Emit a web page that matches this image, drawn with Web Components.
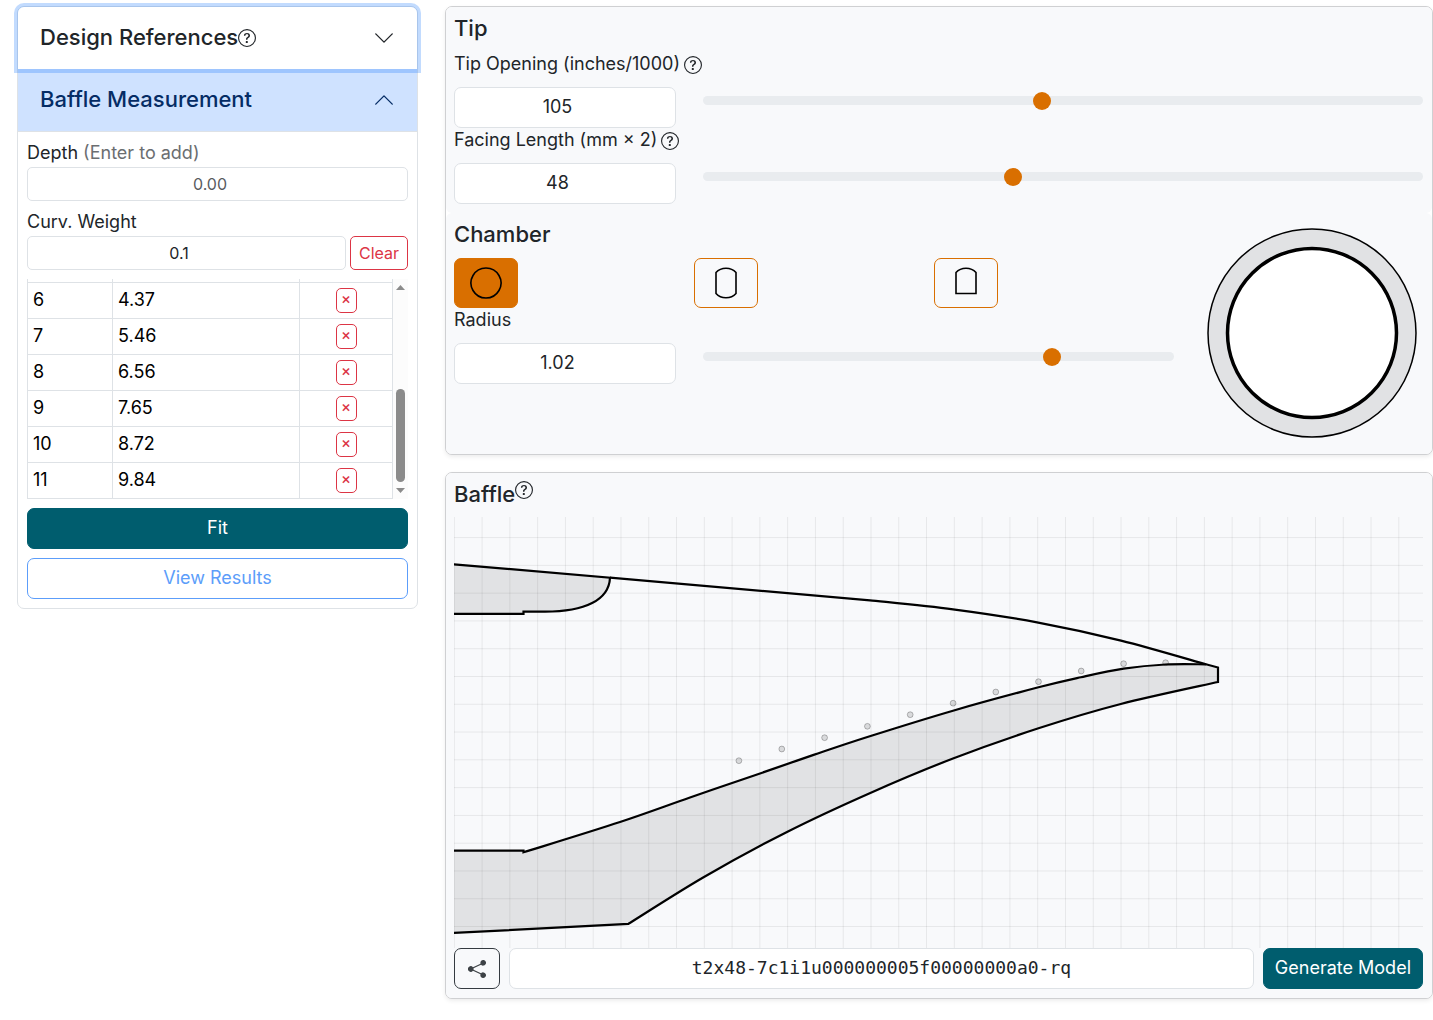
<!DOCTYPE html>
<html lang="en">
<head>
<meta charset="utf-8">
<title>Mouthpiece Designer</title>
<style>
  body { margin: 0; background: #fff; color: #212529; font: 18px/27px Inter, "Liberation Sans", sans-serif; }
</style>
</head>
<body>
<mp-app></mp-app>

<script>
const BASE = `
  *, *::before, *::after { box-sizing: border-box; }
  :host { display: block; }
  button, input { font: inherit; color: inherit; margin: 0; }
  svg { display: block; flex: none; }
  .field { width: 100%; height: 41px; padding: 4px 13px 6px; border: 1px solid #dee2e6; border-radius: 7px; background: #fff; text-align: center; }
  .small { height: 34px; padding: 4px 9px; font-size: 16px; border-radius: 5px; }
  .field::placeholder { color: #595c5f; opacity: 1; }
  .btn { height: 41px; border: 1px solid; border-radius: 7px; background: transparent; padding: 0 11px 3px; }
  .solid { background: #005d6e; border-color: #005d6e; color: #fff; }
`;

function define(name, css, markup, setup) {
  customElements.define(name, class extends HTMLElement {
    connectedCallback() {
      if (this.shadowRoot) return;
      const root = this.attachShadow({ mode: "open" });
      root.innerHTML = `<style>${BASE}${css}</style>` + (typeof markup === "function" ? markup(this) : markup);
      if (setup) setup(root, this);
    }
  });
}

/* Circled question mark */
define("mp-help", `
  button { display: block; border: 0; padding: 0; background: none; width: 18px; height: 18px; }
`, `<button type="button" aria-label="Help"><svg width="18" height="18" viewBox="0 0 16 16" fill="currentColor">
  <path d="M8 15A7 7 0 1 1 8 1a7 7 0 0 1 0 14m0 1A8 8 0 1 0 8 0a8 8 0 0 0 0 16"/>
  <path d="M5.255 5.786a.237.237 0 0 0 .241.247h.825c.138 0 .248-.113.266-.25.09-.656.54-1.134 1.342-1.134.686 0 1.314.343 1.314 1.168 0 .635-.374.927-.965 1.371-.673.489-1.206 1.06-1.168 1.987l.003.217a.25.25 0 0 0 .25.246h.811a.25.25 0 0 0 .25-.25v-.105c0-.718.273-.927 1.01-1.486.609-.463 1.244-.977 1.244-2.056 0-1.511-1.276-2.241-2.673-2.241-1.267 0-2.655.59-2.75 2.286m1.557 5.763c0 .533.425.927 1.01.927.609 0 1.028-.394 1.028-.927 0-.552-.42-.94-1.029-.94-.584 0-1.009.388-1.009.94"/>
</svg></button>`);

/* One accordion entry: header button and a collapsible body */
define("mp-accordion-item", `
  .head { display: flex; align-items: center; width: 100%; height: 62px; padding: 0 22px 1px; border: 0; background: #fff; font-size: 22px; font-weight: 500; position: relative; text-align: left; }
  .head svg { margin-left: auto; }
  .title { display: flex; align-items: center; }
  :host([first]) .head { border-radius: 6px 6px 0 0; }
  :host([focused]) .head { box-shadow: 0 0 0 4px rgba(13,110,253,.25); z-index: 1; }
  :host([open]) .head { background: #cfe2ff; color: #052c65; }
  :host([open]) .head svg { transform: rotate(180deg); }
  .body { display: none; border-top: 1px solid #dee2e6; padding: 9px; }
  :host([open]) .body { display: block; }
`, `<button class="head" type="button"><span class="title"><slot name="title"></slot></span>
  <svg width="22" height="22" viewBox="0 0 16 16" fill="none" stroke="currentColor" stroke-linecap="round" stroke-linejoin="round"><path d="m2 5 6 6 6-6"/></svg></button>
  <div class="body"><slot></slot></div>`);

/* Table of measured depths with its own scroll bar */
define("mp-depth-table", `
  :host { display: flex; height: 220px; overflow: hidden; }
  .view { flex: 1; min-width: 0; overflow: hidden; }
  table { width: 100%; border-collapse: collapse; table-layout: fixed; color: #000; }
  col.n { width: 85px; } col.x { width: 93px; }
  td { border: 1px solid #dee2e6; padding: 0 5px 2px; height: 36px; }
  tr.cut td { height: 3px; padding: 0; border-top: 0; }
  td.x { padding: 0; }
  td.x button { display: block; margin: 0 auto; width: 21px; height: 25px; border: 1px solid #dc3545; border-radius: 5px; background: none; color: #dc3545; font-size: 15px; font-weight: 500; line-height: 20px; padding: 0 0 2px; }
  .bar { width: 15px; background: #fcfcfc; display: flex; flex-direction: column; align-items: center; padding: 6px 0; }
  .thumb { width: 9px; height: 93px; border-radius: 5px; background: #8b8b8b; margin: auto 0 6px; }
`, () => {
  const rows = [[6, "4.37"], [7, "5.46"], [8, "6.56"], [9, "7.65"], [10, "8.72"], [11, "9.84"]];
  return `<div class="view"><table><colgroup><col class="n"><col><col class="x"></colgroup>
    <tbody><tr class="cut" aria-hidden="true"><td></td><td></td><td></td></tr>
    ${rows.map(([n, v]) => `<tr><td>${n}</td><td>${v}</td><td class="x"><button type="button" aria-label="Remove ${n}">×</button></td></tr>`).join("")}
    </tbody></table></div>
    <div class="bar" aria-hidden="true"><svg width="9" height="5" viewBox="0 0 9 5"><path d="M0 5 4.500 0 9 5z" fill="#8b8b8b"/></svg>
    <div class="thumb"></div><svg width="9" height="5" viewBox="0 0 9 5"><path d="M0 0h9L4.500 5z" fill="#8b8b8b"/></svg></div>`;
});

define("mp-measurement", `
  :host { display: flex; flex-direction: column; gap: 9px; }
  label { display: block; line-height: 23px; margin-bottom: 3px; }
  label span { color: #6b6e71; }
  .row { display: flex; gap: 4px; }
  .row .field { flex: 1; min-width: 0; }
  .clear { height: 34px; border-color: #dc3545; color: #dc3545; font-size: 16px; border-radius: 5px; padding: 0 8px; }
  .outline { color: #5c9dfa; border-color: #5c9dfa; }
`, `<div><label for="depth">Depth <span>(Enter to add)</span></label><input class="field small" id="depth" type="number" placeholder="0.00"></div>
  <div><label for="weight">Curv. Weight</label><div class="row"><input class="field small" id="weight" type="number" step="0.1" value="0.1"><button class="btn clear" type="button">Clear</button></div></div>
  <mp-depth-table></mp-depth-table>
  <button class="btn solid" type="button">Fit</button>
  <button class="btn outline" type="button">View Results</button>`);

/* Number box tied to a slider */
define("mp-slider-field", `
  .label { display: flex; align-items: center; gap: 4px; height: 26px; margin-bottom: 9px; }
  label { padding-bottom: 3px; }
  .row { display: grid; grid-template-columns: 222fr var(--track, 720fr); gap: 27px; align-items: start; }
  .row > * { min-width: 0; }
  input[type=range] { appearance: none; width: 100%; height: 26px; background: none; }
  input[type=range]::-webkit-slider-runnable-track { height: 9px; border-radius: 9px; background: #e9ecef; }
  input[type=range]::-webkit-slider-thumb { appearance: none; width: 18px; height: 18px; margin-top: -4px; border-radius: 50%; background: #d96f00; }
`, el => {
  const a = n => el.getAttribute(n);
  const range = `min="${a("min")}" max="${a("max")}" step="${a("step") || 1}" value="${a("value")}"`;
  return `<div class="label"><label for="num">${a("label")}</label><slot></slot></div>
    <div class="row"><input class="field" id="num" type="number" ${range}><input type="range" aria-label="${a("label")}" ${range}></div>`;
}, root => {
  const [num, range] = root.querySelectorAll("input");
  num.addEventListener("input", () => range.value = num.value);
  range.addEventListener("input", () => num.value = range.value);
});

define("mp-shape-picker", `
  :host { display: grid; grid-template-columns: repeat(3, 1fr); }
  button { display: flex; align-items: center; justify-content: center; width: 64px; height: 50px; padding: 0 1px 1px 0; border: 1px solid #d96f00; border-radius: 7px; background: none; }
  button[aria-pressed=true] { background: #d96f00; }
`, () => {
  const shapes = [
    ["Round", "M17 2a15 15 0 1 1-.01 0z"],
    ["Pill", "M7 6.500C12 .8 22 .8 27 6.500v21C22 33.200 12 33.200 7 27.500z"],
    ["Arch", "M7 6.500C12 .8 22 .8 27 6.500v21H7z"]
  ];
  return shapes.map(([n, d], i) => `<button type="button" aria-label="${n}" aria-pressed="${i === 0}"><svg width="34" height="34" viewBox="0 0 34 34" fill="none" stroke="#000" stroke-width="1.600"><path d="${d}"/></svg></button>`).join("");
});

define("mp-chamber-view", `svg { width: 100%; height: auto; }`, `
  <svg viewBox="0 0 222 224" role="img" aria-label="Chamber cross section">
    <circle cx="111" cy="112" r="104" fill="#e1e2e4" stroke="#000" stroke-width="1.500"/>
    <circle cx="111" cy="112" r="84.500" fill="#fff" stroke="#000" stroke-width="3.500"/>
  </svg>`);

/* Side profile of the mouthpiece over a millimetre grid */
define("mp-baffle-view", `svg { width: 100%; height: auto; }`, () => {
  const curve = p => p.slice(0, -1).map((b, i) => {
    const a = p[i - 1] || b, c = p[i + 1], d = p[i + 2] || c;
    return `C${b[0] + (c[0] - a[0]) / 6} ${b[1] + (c[1] - a[1]) / 6} ${c[0] - (d[0] - b[0]) / 6} ${c[1] - (d[1] - b[1]) / 6} ${c[0]} ${c[1]}`;
  }).join("");
  const roof = [[870, 600.3], [953, 609.3], [1037, 622.3], [1121, 640.6], [1206, 664.3]];
  const floor = [[523.5, 852.3], [620, 822], [690, 797.5], [759.3, 773.7], [813.6, 754.9], [867.4, 737], [953, 710.7], [1038.5, 687.3], [1081, 677.2], [1123.6, 668.7], [1165.3, 664.5], [1206, 664.3]];
  const under = [[1218, 682], [1120.8, 704], [1038.5, 728.3], [953, 758.5], [870.3, 792.9], [787, 831.9], [704, 877], [628.5, 923.8]];
  const dots = [[738.9, 760.7], [781.8, 749], [824.6, 737.7], [867.4, 726.3], [910.2, 714.7], [953.1, 703.2], [995.8, 692], [1038.5, 681.7], [1081.2, 671], [1123.6, 663.7], [1165.6, 662.7]];
  let grid = "";
  for (let i = 0; i < 35; i++) grid += `M${454.3 + i * 27.78} 517V948`;
  for (let i = 0; i < 15; i++) grid += `M454 ${537.6 + i * 27.78}H1423`;
  return `<svg viewBox="454 517 969 431" role="img" aria-label="Baffle profile">
    <path d="${grid}" stroke="#000" stroke-opacity=".07" fill="none"/>
    <g stroke="#000" stroke-width="2.200" fill="#000" fill-opacity=".09">
      <path d="M440 563.100 610 577.700C609 600 585 611.700 545 611.700H523.500V613.900H440z"/>
      <path d="M610 577.700 870 600.300${curve(roof)}" fill="none"/>
      <path d="M440 850.700H523.500V852.300${curve(floor)}L1218 667.500V682${curve(under)}L440 933.700z"/>
    </g>
    <g stroke="#000" stroke-opacity=".25" fill="#000" fill-opacity=".12">${dots.map(([x, y]) => `<circle cx="${x}" cy="${y}" r="2.900"/>`).join("")}</g>
  </svg>`;
});

define("mp-card", `
  :host { background: #fff; border: 1px solid #cfd0d2; border-radius: 7px; box-shadow: 0 2px 4px rgba(0,0,0,.075); }
`, `<slot></slot>`);

define("mp-section", `
  :host { background: #f8f9fb; border-radius: 6px; padding: 8px 9px 9px 8px; }
  h2 { display: flex; margin: 0 0 var(--heading-gap, 9px); height: 28px; font-size: 22px; font-weight: 500; line-height: 27px; }
`, el => `<h2>${el.getAttribute("heading")}<slot name="help"></slot></h2><slot></slot>`);

define("mp-chamber", `
  :host { display: grid; grid-template-columns: 720fr 222fr; gap: 27px; background: #f8f9fb; border-radius: 6px; padding: 8px 9px 9px 8px; }
  h2 { margin: 0 0 9px; height: 28px; font-size: 22px; font-weight: 500; line-height: 27px; }
  mp-slider-field { --track: 471fr; }
`, `<div><h2>Chamber</h2><mp-shape-picker></mp-shape-picker>
  <mp-slider-field label="Radius" value="1.02" min="0.72" max="1.12" step="0.01"></mp-slider-field></div>
  <mp-chamber-view></mp-chamber-view>`);

define("mp-model-bar", `
  :host { display: flex; gap: 9px; }
  .share { width: 46px; display: flex; align-items: center; justify-content: center; padding: 0; border-color: #343a40; color: #3d4246; }
  .field { flex: 1; min-width: 0; font-family: "DejaVu Sans Mono", monospace; font-size: 18px; padding: 4px 13px 6px; }
`, `<button class="btn share" type="button" aria-label="Share"><svg width="18" height="18" viewBox="0 0 16 16" fill="currentColor"><path d="M11 2.500a2.500 2.500 0 1 1 .603 1.628l-6.718 3.120a2.500 2.500 0 0 1 0 1.504l6.718 3.120a2.500 2.500 0 1 1-.488.876l-6.718-3.120a2.500 2.500 0 1 1 0-3.256l6.718-3.120A2.500 2.500 0 0 1 11 2.500"/></svg></button>
  <input class="field" type="text" aria-label="Model code" value="t2x48-7c1i1u000000005f00000000a0-rq">
  <button class="btn solid" type="button">Generate Model</button>`);

define("mp-app", `
  :host { display: grid; grid-template-columns: minmax(0, 401fr) minmax(0, 988fr); gap: 27px; align-items: start; padding: 6px 0 6px 17px; }
  .accordion { border: 1px solid #dee2e6; border-radius: 7px; }
  main { display: flex; flex-direction: column; gap: 17px; }
  .drawing { --heading-gap: 8px; }
`, `<div class="accordion">
    <mp-accordion-item first focused><span slot="title">Design References</span><mp-help slot="title"></mp-help></mp-accordion-item>
    <mp-accordion-item open><span slot="title">Baffle Measurement</span><mp-measurement></mp-measurement></mp-accordion-item>
  </div>
  <main>
    <mp-card>
      <mp-section heading="Tip">
        <mp-slider-field label="Tip Opening (inches/1000)" value="105" min="65" max="150"><mp-help></mp-help></mp-slider-field>
        <mp-slider-field label="Facing Length (mm × 2)" value="48" min="30" max="72"><mp-help></mp-help></mp-slider-field>
      </mp-section>
      <mp-chamber></mp-chamber>
    </mp-card>
    <mp-card>
      <mp-section class="drawing" heading="Baffle"><mp-help slot="help"></mp-help><mp-baffle-view></mp-baffle-view><mp-model-bar></mp-model-bar></mp-section>
    </mp-card>
  </main>`);
</script>
</body>
</html>
